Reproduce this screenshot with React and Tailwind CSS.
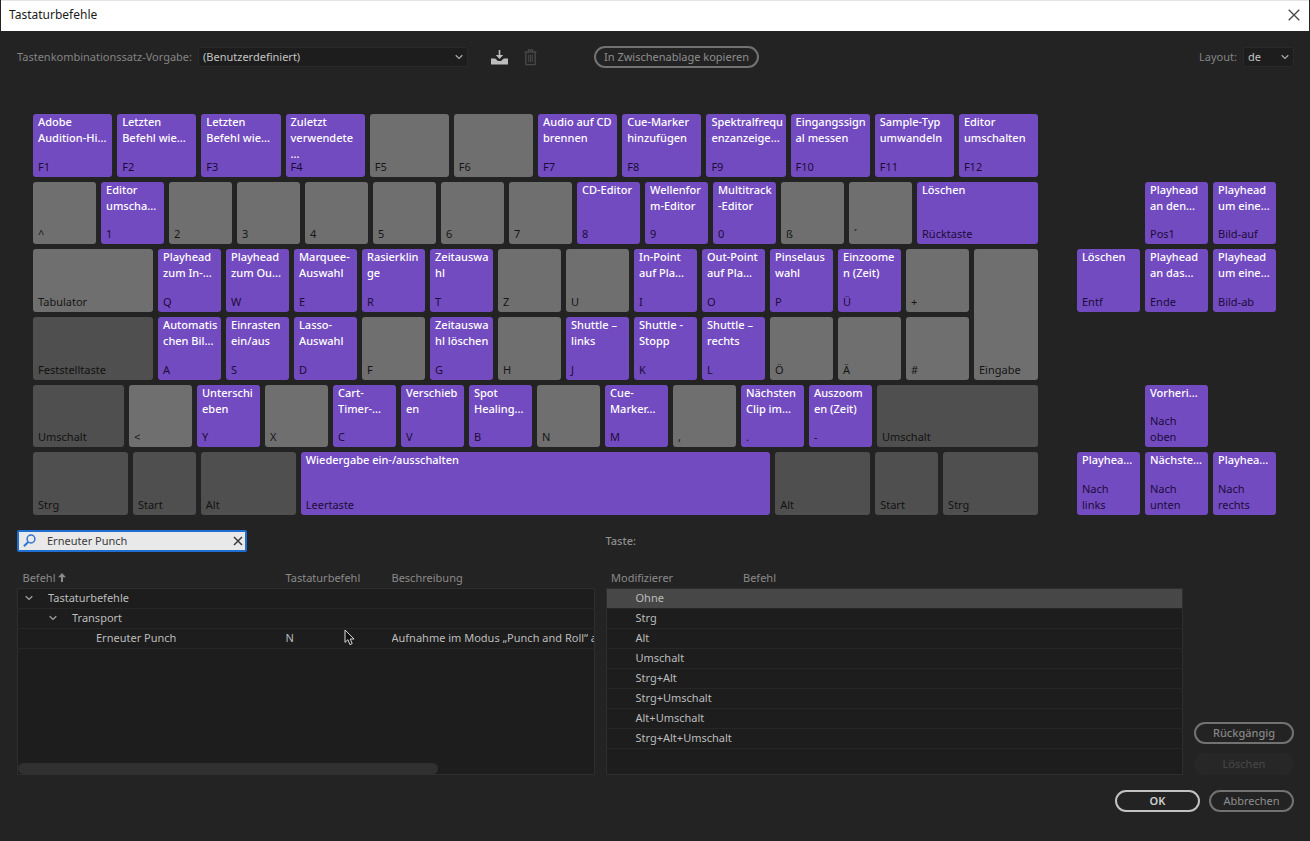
import { useState } from "react";

const VIOLET = "bg-[#734bc0] text-[#1c0b3a]";
const GRAY = "bg-[#6f6f6f] text-[#161616]";
const DARK = "bg-[#4f4f4f] text-[#121212]";

// cmd = assigned command, mod = modifier key, w = relative width
const functionRow = [
  { name: "F1", cmd: "Adobe\nAudition-Hi..." },
  { name: "F2", cmd: "Letzten\nBefehl wie..." },
  { name: "F3", cmd: "Letzten\nBefehl wie..." },
  { name: "F4", cmd: "Zuletzt\nverwendete\n..." },
  { name: "F5" },
  { name: "F6" },
  { name: "F7", cmd: "Audio auf CD\nbrennen" },
  { name: "F8", cmd: "Cue-Marker\nhinzufügen" },
  { name: "F9", cmd: "Spektralfrequ\nenzanzeige..." },
  { name: "F10", cmd: "Eingangssign\nal messen" },
  { name: "F11", cmd: "Sample-Typ\numwandeln" },
  { name: "F12", cmd: "Editor\numschalten" },
];

const numberRow = [
  { name: "^" },
  { name: "1", cmd: "Editor\numscha..." },
  { name: "2" },
  { name: "3" },
  { name: "4" },
  { name: "5" },
  { name: "6" },
  { name: "7" },
  { name: "8", cmd: "CD-Editor" },
  { name: "9", cmd: "Wellenfor\nm-Editor" },
  { name: "0", cmd: "Multitrack\n-Editor" },
  { name: "ß" },
  { name: "´" },
  { name: "Rücktaste", cmd: "Löschen", w: 121 },
];

const upperRow = [
  { name: "Tabulator", w: 120 },
  { name: "Q", cmd: "Playhead\nzum In-..." },
  { name: "W", cmd: "Playhead\nzum Ou..." },
  { name: "E", cmd: "Marquee-\nAuswahl" },
  { name: "R", cmd: "Rasierklin\nge" },
  { name: "T", cmd: "Zeitauswa\nhl" },
  { name: "Z" },
  { name: "U" },
  { name: "I", cmd: "In-Point\nauf Pla..." },
  { name: "O", cmd: "Out-Point\nauf Pla..." },
  { name: "P", cmd: "Pinselaus\nwahl" },
  { name: "Ü", cmd: "Einzoome\nn (Zeit)" },
  { name: "+" },
];

const homeRow = [
  { name: "Feststelltaste", mod: true, w: 120 },
  { name: "A", cmd: "Automatis\nchen Bil..." },
  { name: "S", cmd: "Einrasten\nein/aus" },
  { name: "D", cmd: "Lasso-\nAuswahl" },
  { name: "F" },
  { name: "G", cmd: "Zeitauswa\nhl löschen" },
  { name: "H" },
  { name: "J", cmd: "Shuttle –\nlinks" },
  { name: "K", cmd: "Shuttle -\nStopp" },
  { name: "L", cmd: "Shuttle –\nrechts" },
  { name: "Ö" },
  { name: "Ä" },
  { name: "#" },
];

const lowerRow = [
  { name: "Umschalt", mod: true, w: 91 },
  { name: "<" },
  { name: "Y", cmd: "Unterschi\neben" },
  { name: "X" },
  { name: "C", cmd: "Cart-\nTimer-..." },
  { name: "V", cmd: "Verschieb\nen" },
  { name: "B", cmd: "Spot\nHealing..." },
  { name: "N" },
  { name: "M", cmd: "Cue-\nMarker..." },
  { name: "," },
  { name: ".", cmd: "Nächsten\nClip im..." },
  { name: "-", cmd: "Auszoom\nen (Zeit)" },
  { name: "Umschalt", mod: true, w: 161 },
];

const bottomRow = [
  { name: "Strg", mod: true, w: 95 },
  { name: "Start", mod: true },
  { name: "Alt", mod: true, w: 95 },
  { name: "Leertaste", cmd: "Wiedergabe ein-/ausschalten", w: 470 },
  { name: "Alt", mod: true, w: 95 },
  { name: "Start", mod: true },
  { name: "Strg", mod: true, w: 95 },
];

// 3 x 6 cluster on the right, null leaves the cell empty
const navKeys = [
  null,
  null,
  null,
  null,
  { name: "Pos1", cmd: "Playhead\nan den..." },
  { name: "Bild-auf", cmd: "Playhead\num eine..." },
  { name: "Entf", cmd: "Löschen" },
  { name: "Ende", cmd: "Playhead\nan das..." },
  { name: "Bild-ab", cmd: "Playhead\num eine..." },
  null,
  null,
  null,
  null,
  { name: "Nach\noben", cmd: "Vorheri..." },
  null,
  { name: "Nach\nlinks", cmd: "Playhea..." },
  { name: "Nach\nunten", cmd: "Nächste..." },
  { name: "Nach\nrechts", cmd: "Playhea..." },
];

const modifiers = [
  "Ohne",
  "Strg",
  "Alt",
  "Umschalt",
  "Strg+Alt",
  "Strg+Umschalt",
  "Alt+Umschalt",
  "Strg+Alt+Umschalt",
];

function Key({ name, cmd, mod, w = 63 }) {
  const tone = cmd ? VIOLET : mod ? DARK : GRAY;
  return (
    <button
      className={`grid min-w-0 overflow-hidden rounded-[3px] pl-[5px] pb-[2px] text-left whitespace-pre leading-4 ${tone}`}
      style={{ flex: `${w} 1 ${w}px` }}
    >
      <span className="col-start-1 row-start-1 self-start font-medium text-white">
        {cmd}
      </span>
      <span className="col-start-1 row-start-1 self-end">{name}</span>
    </button>
  );
}

function KeyRow({ keys }) {
  return (
    <div className="flex min-h-0 gap-[5px]">
      {keys.map((k, i) => (
        <Key key={i} {...k} />
      ))}
    </div>
  );
}

function Keyboard() {
  return (
    <div className="mt-[47px] flex h-[401px] gap-[39px] pl-[33px] pr-[34px]">
      <div className="grid min-w-0 flex-1 grid-rows-6 gap-[5px]">
        <KeyRow keys={functionRow} />
        <KeyRow keys={numberRow} />
        {/* Eingabe spans both rows */}
        <div className="row-span-2 flex min-h-0 gap-[5px]">
          <div className="grid min-w-0 grow-[936] basis-[936px] grid-rows-2 gap-[5px]">
            <KeyRow keys={upperRow} />
            <KeyRow keys={homeRow} />
          </div>
          <Key name="Eingabe" w={64} />
        </div>
        <KeyRow keys={lowerRow} />
        <KeyRow keys={bottomRow} />
      </div>
      <div className="grid w-[199px] grid-cols-3 grid-rows-6 gap-[5px]">
        {navKeys.map((k, i) => (k ? <Key key={i} {...k} /> : <div key={i} />))}
      </div>
    </div>
  );
}

function Chevron({ className }) {
  return (
    <svg className={className} width="8" height="6" viewBox="0 0 8 6" fill="none" stroke="currentColor" strokeWidth="1.3">
      <path d="M0.7 1.2 4 4.4 7.3 1.2" />
    </svg>
  );
}

function Dropdown({ id, value, className }) {
  return (
    <div className={`relative h-5 ${className}`}>
      <select
        id={id}
        className="h-full w-full appearance-none rounded-[2px] border border-[#292929] bg-[#1d1d1d] pl-1 text-[#c4c4c4] outline-none"
      >
        <option>{value}</option>
      </select>
      <Chevron className="pointer-events-none absolute right-[5px] top-[7px] text-[#a8a8a8]" />
    </div>
  );
}

function PillButton({ children, className }) {
  return (
    <button
      className={`flex h-[22px] items-center justify-center rounded-full border-2 ${className}`}
    >
      {children}
    </button>
  );
}

function Toolbar() {
  return (
    <div className="mt-4 flex h-5 items-center pl-[17px] pr-4">
      <label htmlFor="preset" className="w-[181px] whitespace-nowrap text-[#848484]">
        Tastenkombinationssatz-Vorgabe:
      </label>
      <Dropdown id="preset" value="(Benutzerdefiniert)" className="w-[270px]" />
      <button aria-label="Speichern" className="ml-[23px] text-[#bdbdbd]">
        <svg width="17" height="15" viewBox="0 0 17 15" fill="currentColor">
          <path d="M7.7 0h1.6v5h2.9L8.5 9 4.8 5h2.9z" />
          <path d="M0 8.5h4.2L7 11h3l2.8-2.5H17V14.5H0z" />
        </svg>
      </button>
      <button aria-label="Entfernen" disabled className="ml-4 text-[#484848]">
        <svg width="13" height="17" viewBox="0 0 13 17" fill="none" stroke="currentColor" strokeWidth="1.4">
          <path d="M0.5 3h12M4.5 3V1h4v2M1.8 3v12.6h9.4V3" />
          <path d="M4.7 5.5v7.6M8.3 5.5v7.6M6.5 5.5v7.6" strokeWidth="1" />
        </svg>
      </button>
      <PillButton className="ml-[57px] w-[165px] border-[#727272] text-[#8e8e8e]">
        In Zwischenablage kopieren
      </PillButton>
      <label htmlFor="layout" className="ml-auto mr-[6px] text-[#848484]">
        Layout:
      </label>
      <Dropdown id="layout" value="de" className="w-[51px]" />
    </div>
  );
}

function SearchBox() {
  const [query, setQuery] = useState("Erneuter Punch");
  return (
    <div className="relative h-[22px] w-[230px]">
      <input
        type="text"
        aria-label="Suchen"
        value={query}
        onChange={(e) => setQuery(e.target.value)}
        className="h-full w-full rounded-[2px] border-2 border-[#1f6fd0] bg-[#e9e9e9] pb-[2px] pl-7 pr-6 text-[#3b3b3b] outline-none"
      />
      <svg className="absolute left-[6px] top-[4px]" width="13" height="13" viewBox="0 0 13 13" fill="none" stroke="#2f74d6">
        <circle cx="8" cy="5" r="3.9" strokeWidth="1.5" />
        <path d="M5.2 8 0.9 12.2" strokeWidth="2" />
      </svg>
      <button
        aria-label="Suche löschen"
        onClick={() => setQuery("")}
        className="absolute right-[4px] top-[6px]"
      >
        <svg width="10" height="10" viewBox="0 0 10 10" stroke="#3a3a3a" strokeWidth="1.5">
          <path d="M1 1 9 9M9 1 1 9" />
        </svg>
      </button>
    </div>
  );
}

function Cursor() {
  return (
    <svg className="absolute left-[58px] top-0" width="11" height="17" viewBox="0 0 11 17">
      <path
        d="M1 1v12.4l2.9-2.7 2 4.9 2.3-1-2-4.6h3.9z"
        fill="#111"
        stroke="#d8d8d8"
        strokeWidth="1"
      />
    </svg>
  );
}

function CommandTable() {
  return (
    <table className="h-[207px] w-full table-fixed border-collapse text-left whitespace-nowrap">
      <colgroup>
        <col className="w-[268px]" />
        <col className="w-[106px]" />
        <col />
      </colgroup>
      <thead>
        <tr className="h-5 text-[#8a8a8a]">
          <th className="p-0 pl-[5px] font-normal">
            <span className="flex items-center gap-[3px]">
              Befehl
              <svg width="8" height="9" viewBox="0 0 8 9" fill="currentColor">
                <path d="M4 0 8 4.2H5V9H3V4.2H0z" />
              </svg>
            </span>
          </th>
          <th className="p-0 font-normal">Tastaturbefehl</th>
          <th className="p-0 font-normal">Beschreibung</th>
        </tr>
      </thead>
      <tbody className="border border-[#2e2e2e] bg-[#1d1d1d] text-[#bcbcbc]">
        <tr className="h-5 border-b border-[#272727]">
          <td colSpan={3} className="p-0 pl-[7px]">
            <span className="flex items-center gap-[15px]">
              <Chevron className="text-[#a0a0a0]" />
              Tastaturbefehle
            </span>
          </td>
        </tr>
        <tr className="h-5 border-b border-[#272727]">
          <td colSpan={3} className="p-0 pl-[31px]">
            <span className="flex items-center gap-[15px]">
              <Chevron className="text-[#a0a0a0]" />
              Transport
            </span>
          </td>
        </tr>
        <tr className="h-5 border-b border-[#272727]">
          <td className="p-0 pl-[78px]">Erneuter Punch</td>
          <td className="relative p-0">
            N
            <Cursor />
          </td>
          <td className="overflow-hidden p-0">
            Aufnahme im Modus „Punch and Roll“ aktivieren
          </td>
        </tr>
        <tr>
          <td colSpan={3} className="p-0 align-bottom">
            {/* horizontal scroll thumb */}
            <div className="h-[11px] w-[73%] rounded-full bg-[#303030]" />
          </td>
        </tr>
      </tbody>
    </table>
  );
}

function ModifierTable() {
  return (
    <table className="h-[207px] w-full table-fixed border-collapse text-left whitespace-nowrap">
      <colgroup>
        <col className="w-[137px]" />
        <col />
      </colgroup>
      <thead>
        <tr className="h-5 text-[#8a8a8a]">
          <th className="p-0 pl-[5px] font-normal">Modifizierer</th>
          <th className="p-0 font-normal">Befehl</th>
        </tr>
      </thead>
      <tbody className="border border-[#2e2e2e] bg-[#1d1d1d] text-[#bcbcbc]">
        {modifiers.map((m, i) => (
          <tr
            key={m}
            className={`h-5 border-b border-[#272727] ${i === 0 ? "bg-[#474747]" : ""}`}
          >
            <td className="p-0 pl-[29px]">{m}</td>
            <td className="p-0" />
          </tr>
        ))}
        <tr>
          <td colSpan={2} className="p-0" />
        </tr>
      </tbody>
    </table>
  );
}

export default function App() {
  return (
    <main className="min-h-screen bg-[#232323] font-['Noto_Sans',sans-serif] text-[11px] leading-4">
      <header className="mx-px flex h-[31px] items-center justify-between border-t border-[#e4e4e4] bg-white pb-[2px] pl-2 pr-[9px]">
        <h1 className="text-xs text-[#1b1b1b]">Tastaturbefehle</h1>
        <button aria-label="Schließen">
          <svg width="12" height="12" viewBox="0 0 12 12" stroke="#444" strokeWidth="1.3">
            <path d="M0.7 0.7 11.3 11.3M11.3 0.7 0.7 11.3" />
          </svg>
        </button>
      </header>

      <Toolbar />
      <Keyboard />

      <div className="mt-[15px] grid grid-cols-[1fr_1fr_100px] gap-x-[11px] gap-y-4 pl-[17px] pr-4">
        <SearchBox />
        <p className="col-span-2 self-center font-medium text-[#8f8f8f]">Taste:</p>
        <CommandTable />
        <ModifierTable />
        <div className="flex flex-col justify-end gap-[9px]">
          <PillButton className="border-[#727272] font-medium text-[#868686]">
            Rückgängig
          </PillButton>
          <PillButton className="border-[#272727] bg-[#272727] text-[#474747]">
            Löschen
          </PillButton>
        </div>
      </div>

      <footer className="mt-[15px] flex justify-end gap-[9px] pr-4">
        <PillButton className="w-[85px] border-[#c2c2c2] font-semibold text-[#cfcfcf]">
          OK
        </PillButton>
        <PillButton className="w-[85px] border-[#727272] text-[#8e8e8e]">
          Abbrechen
        </PillButton>
      </footer>
    </main>
  );
}
